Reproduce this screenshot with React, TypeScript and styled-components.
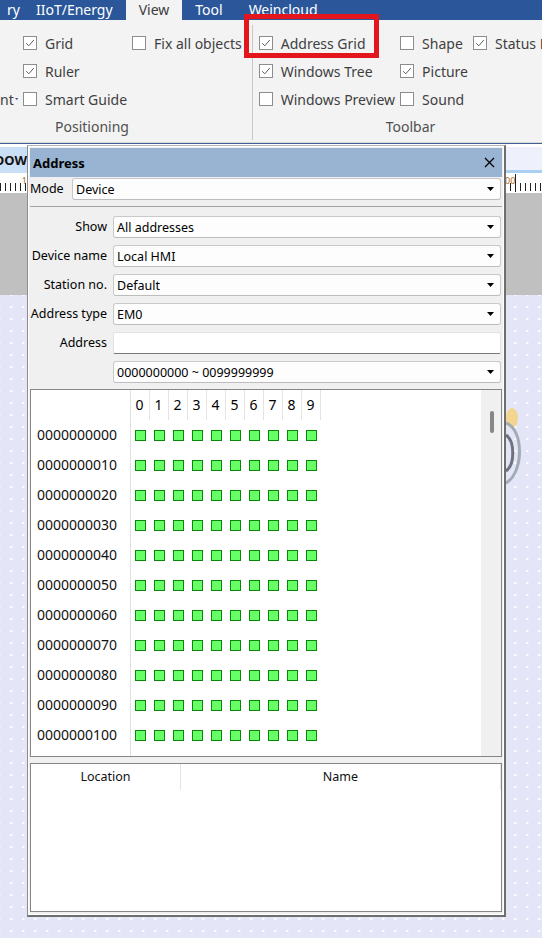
import React from "react";
import styled, { createGlobalStyle } from "styled-components";

const GlobalStyle = createGlobalStyle`
  html, body {
    margin: 0;
    padding: 0;
  }
  body {
    font-family: "Noto Sans", "Segoe UI", sans-serif;
    background: #e5e5f8;
  }
`;

const Page = styled.div`
  position: relative;
  width: 542px;
  height: 938px;
  overflow: hidden;
  display: flex;
  flex-direction: column;
`;

/* ---------- ribbon ---------- */

const TabStrip = styled.div`
  height: 20px;
  flex-shrink: 0;
  display: flex;
  background: #2b579a;
`;

const Tab = styled.div<{ $active?: boolean }>`
  padding: 0 13px;
  font-size: 14px;
  line-height: 20px;
  white-space: nowrap;
  color: ${(p) => (p.$active ? "#3c3c3c" : "#fff")};
  background: ${(p) => (p.$active ? "#f3f3f3" : "transparent")};

  &:first-child {
    padding: 0 3px 0 7px;
  }
`;

const Ribbon = styled.div`
  height: 123px;
  box-sizing: border-box;
  flex-shrink: 0;
  display: flex;
  overflow: hidden;
  background: #f3f3f3;
  border-bottom: 1px solid #d8d8d8;
`;

const Group = styled.div<{ $pad: string }>`
  flex-shrink: 0;
  display: flex;
  flex-direction: column;
  padding: ${(p) => p.$pad};
  padding-top: 9px;
`;

const GroupBody = styled.div`
  display: flex;
  gap: 5px;
  height: 85px;
`;

const Column = styled.div<{ $width?: number }>`
  display: flex;
  flex-direction: column;
  flex-shrink: 0;
  ${(p) => (p.$width ? `width: ${p.$width}px;` : "")}
`;

const CheckRow = styled.div`
  height: 28px;
  display: flex;
  align-items: center;
  gap: 8px;
  font-size: 14px;
  color: #3f3f3f;
  white-space: nowrap;
`;

const DropRow = styled(CheckRow)`
  justify-content: flex-end;
  gap: 1px;
`;

const Box = styled.span`
  width: 14px;
  height: 14px;
  box-sizing: border-box;
  flex-shrink: 0;
  border: 1px solid #8d8d8d;
  background: #fff;
  display: flex;
  align-items: center;
  justify-content: center;
`;

const GroupLabel = styled.div<{ $center?: boolean }>`
  height: 26px;
  line-height: 26px;
  font-size: 14px;
  color: #505050;
  white-space: nowrap;
  text-align: ${(p) => (p.$center ? "center" : "left")};
  padding-left: ${(p) => (p.$center ? "0" : "55px")};
`;

const GroupSep = styled.div`
  width: 1px;
  flex-shrink: 0;
  margin: 5px 0 2px;
  background: #c8c8c8;
`;

const Highlight = styled.div`
  position: absolute;
  left: 244px;
  top: 14px;
  width: 135px;
  height: 44px;
  box-sizing: border-box;
  border: 5px solid #e3161d;
  pointer-events: none;
`;

/* ---------- workspace behind the panel ---------- */

const Workspace = styled.div`
  flex: 1;
  position: relative;
  display: flex;
  flex-direction: column;
  background: #fff;
  border-top: 1px solid #3e5f95;
  padding-top: 3px;
`;

const DocTabs = styled.div`
  height: 26px;
  flex-shrink: 0;
  display: flex;
`;

const DocTab = styled.div`
  width: 27px;
  overflow: hidden;
  display: flex;
  justify-content: flex-end;
  align-items: center;
  background: #c9dff6;
  font-size: 13px;
  font-weight: 700;
  color: #111;
  white-space: nowrap;
`;

const DocTabFill = styled.div`
  flex: 1;
  background: #eef1fb;
  border-bottom: 3px solid #a9cff2;
`;

const Ruler = styled.div`
  height: 20px;
  flex-shrink: 0;
  display: flex;
  justify-content: space-between;
  background-color: #fff;
  background-image: repeating-linear-gradient(
    to right,
    #222 0 1px,
    transparent 1px 5px
  );
  background-size: 100% 8px;
  background-position: 0 10px;
  background-repeat: no-repeat;
  font-size: 9px;
  line-height: 12px;
  color: #b06a20;
`;

const RulerStart = styled.div`
  width: 27px;
  text-align: right;
  padding-top: 2px;
`;

const RulerEnd = styled.div`
  width: 37px;
  display: flex;
  align-items: flex-start;
  padding-top: 2px;
`;

const LongTick = styled.span`
  width: 1px;
  height: 18px;
  background: #222;
  margin-top: -1px;
`;

const GrayBand = styled.div`
  height: 102px;
  flex-shrink: 0;
  background: #c0c0c0;
`;

const Canvas = styled.div`
  flex: 1;
  position: relative;
  background-color: #e5e5f8;
  background-image: radial-gradient(circle, #ffffff 0.9px, transparent 1.2px);
  background-size: 12px 12px;
  background-position: 5.4px -6px;
`;

const CanvasPicture = styled.svg`
  position: absolute;
  left: 505px;
  top: 110px;
`;

/* ---------- address panel ---------- */

const Panel = styled.div`
  position: absolute;
  left: 27px;
  top: 1px;
  width: 479px;
  height: 772px;
  box-sizing: border-box;
  display: flex;
  flex-direction: column;
  padding: 2px 2px 3px 2px;
  background: #f0f0f0;
  border-left: 1px solid #8c8c8c;
  border-top: 1px solid #b4b4b4;
  border-right: 2px solid #6e6e6e;
  border-bottom: 2px solid #6e6e6e;
  box-shadow: inset 1px 1px 0 #fff, inset -1px -1px 0 #fff;
  font-size: 12.5px;
  color: #000;
`;

const TitleBar = styled.div`
  height: 29px;
  flex-shrink: 0;
  display: flex;
  align-items: center;
  justify-content: space-between;
  padding: 0 7px 0 3px;
  background: #99b4d2;
  font-size: 13px;
  font-weight: 700;
`;

const ModeRow = styled.div`
  margin-top: 1px;
  display: flex;
  padding-right: 1px;
`;

const ModeLabel = styled.div`
  width: 42px;
  line-height: 22px;
  flex-shrink: 0;
`;

const Divider = styled.div`
  margin-top: 6px;
  height: 1px;
  flex-shrink: 0;
  background: #a3a3a3;
`;

const Fields = styled.div`
  margin-top: 9px;
  display: grid;
  grid-template-columns: 83px 1fr;
  row-gap: 7px;
  padding-right: 1px;
`;

const FieldLabel = styled.div`
  line-height: 22px;
  text-align: right;
  padding-right: 6px;
  white-space: nowrap;
`;

const Combo = styled.div`
  flex: 1;
  height: 22px;
  box-sizing: border-box;
  display: flex;
  align-items: center;
  justify-content: space-between;
  padding: 0 6px 0 3px;
  background: #fdfdfd;
  border: 1px solid #c9c9c9;
  border-bottom-color: #bdbdbd;
  border-radius: 3px;
  white-space: nowrap;
`;

const TextInput = styled.div`
  height: 22px;
  box-sizing: border-box;
  background: #fff;
  border: 1px solid #e2e2e2;
  border-bottom: 1px solid #7a7a7a;
  border-radius: 2px;
`;

const GridBox = styled.div`
  margin-top: 6px;
  height: 368px;
  box-sizing: border-box;
  flex-shrink: 0;
  display: flex;
  background: #fff;
  border: 1px solid #868686;
`;

const LabelColumn = styled.div`
  width: 100px;
  box-sizing: border-box;
  border-right: 1px solid #e1e1e1;
  padding-top: 30px;
`;

const RowLabel = styled.div`
  height: 30px;
  line-height: 30px;
  padding-left: 6px;
  font-size: 14px;
  color: #111;
`;

const CellArea = styled.div`
  flex: 1;
  display: flex;
  flex-direction: column;
`;

const CellRow = styled.div`
  height: 30px;
  display: flex;
  font-size: 14px;
`;

const HeadCell = styled.div`
  width: 19px;
  box-sizing: border-box;
  border-right: 1px solid #e4e4e4;
  text-align: center;
  line-height: 30px;
  padding-right: 1px;
`;

const Cell = styled.div`
  width: 19px;
  display: flex;
  align-items: center;
  justify-content: center;
`;

const Bit = styled.span<{ $on: boolean }>`
  width: 11px;
  height: 11px;
  box-sizing: border-box;
  border: 1px solid #0a860a;
  background: ${(p) => (p.$on ? "#66ff66" : "#ffffff")};
`;

const ScrollTrack = styled.div`
  width: 20px;
  flex-shrink: 0;
  display: flex;
  justify-content: center;
  padding-top: 21px;
  background: #f0f0f0;
`;

const ScrollThumb = styled.div`
  width: 4px;
  height: 22px;
  border-radius: 2px;
  background: #878787;
  margin-left: 1px;
`;

const ListBox = styled.div`
  margin-top: 6px;
  flex: 1;
  background: #fff;
  border: 1px solid #868686;
`;

const ListHeader = styled.div`
  display: flex;
  height: 26px;
`;

const ListHeadCell = styled.div<{ $width: number }>`
  width: ${(p) => p.$width}px;
  box-sizing: border-box;
  border-right: 1px solid #e4e4e4;
  text-align: center;
  line-height: 26px;
  color: #111;
`;

const Check = () => (
  <svg width="12" height="12" viewBox="0 0 12 12">
    <path d="M2.2 6.2 L4.8 8.8 L9.8 3" fill="none" stroke="#5e5e5e" strokeWidth="1" />
  </svg>
);

const Checkbox = ({ label, checked }: { label: string; checked?: boolean }) => (
  <CheckRow>
    <Box>{checked ? <Check /> : null}</Box>
    {label}
  </CheckRow>
);

const Arrow = ({ color = "#000" }: { color?: string }) => (
  <svg width="7" height="4" viewBox="0 0 7 4">
    <path d="M0 0 H7 L3.5 4 Z" fill={color} />
  </svg>
);

const Dropdown = ({ value }: { value: string }) => (
  <Combo>
    <span>{value}</span>
    <Arrow />
  </Combo>
);

const rows = Array.from({ length: 11 }, (_, i) => String(i * 10).padStart(10, "0"));
const digits = Array.from({ length: 10 }, (_, i) => i);

export default function App() {
  return (
    <>
      <GlobalStyle />
      <Page>
        <TabStrip>
          <Tab>ry</Tab>
          <Tab>IIoT/Energy</Tab>
          <Tab $active>View</Tab>
          <Tab>Tool</Tab>
          <Tab>Weincloud</Tab>
        </TabStrip>

        <Ribbon>
          <Group $pad="0 10px 0 0">
            <GroupBody>
              <Column $width={18}>
                <CheckRow />
                <CheckRow />
                <DropRow>
                  nt
                  <Arrow color="#3b5f96" />
                </DropRow>
              </Column>
              <Column $width={104}>
                <Checkbox label="Grid" checked />
                <Checkbox label="Ruler" checked />
                <Checkbox label="Smart Guide" />
              </Column>
              <Column>
                <Checkbox label="Fix all objects" />
              </Column>
            </GroupBody>
            <GroupLabel>Positioning</GroupLabel>
          </Group>
          <GroupSep />
          <Group $pad="0 7px 0 6px">
            <GroupBody>
              <Column>
                <Checkbox label="Address Grid" checked />
                <Checkbox label="Windows Tree" checked />
                <Checkbox label="Windows Preview" />
              </Column>
              <Column>
                <Checkbox label="Shape" />
                <Checkbox label="Picture" checked />
                <Checkbox label="Sound" />
              </Column>
              <Column>
                <Checkbox label="Status Bar" checked />
              </Column>
            </GroupBody>
            <GroupLabel $center>Toolbar</GroupLabel>
          </Group>
        </Ribbon>

        <Workspace>
          <DocTabs>
            <DocTab>10 : WINDOW</DocTab>
            <DocTabFill />
          </DocTabs>
          <Ruler>
            <RulerStart>1</RulerStart>
            <RulerEnd>
              00
              <LongTick />
            </RulerEnd>
          </Ruler>
          <GrayBand />
          <Canvas>
            <CanvasPicture width="24" height="80" viewBox="0 0 24 80">
              <ellipse cx="7" cy="13" rx="6" ry="10" fill="#f4d58f" />
              <path d="M1 18 C 19 24, 19 68, 1 78" fill="none" stroke="#a2acb5" strokeWidth="3" />
              <path d="M1 30 C 10 36, 10 60, 1 66" fill="none" stroke="#6d747c" strokeWidth="3" />
            </CanvasPicture>
          </Canvas>

          <Panel>
            <TitleBar>
              <span>Address</span>
              <svg width="11" height="11" viewBox="0 0 11 11">
                <path d="M1 1 L10 10 M10 1 L1 10" stroke="#000" strokeWidth="1.3" />
              </svg>
            </TitleBar>

            <ModeRow>
              <ModeLabel>Mode</ModeLabel>
              <Dropdown value="Device" />
            </ModeRow>
            <Divider />

            <Fields>
              <FieldLabel>Show</FieldLabel>
              <Dropdown value="All addresses" />
              <FieldLabel>Device name</FieldLabel>
              <Dropdown value="Local HMI" />
              <FieldLabel>Station no.</FieldLabel>
              <Dropdown value="Default" />
              <FieldLabel>Address type</FieldLabel>
              <Dropdown value="EM0" />
              <FieldLabel>Address</FieldLabel>
              <TextInput />
              <FieldLabel />
              <Dropdown value="0000000000 ~ 0099999999" />
            </Fields>

            <GridBox>
              <LabelColumn>
                {rows.map((r) => (
                  <RowLabel key={r}>{r}</RowLabel>
                ))}
              </LabelColumn>
              <CellArea>
                <CellRow>
                  {digits.map((d) => (
                    <HeadCell key={d}>{d}</HeadCell>
                  ))}
                </CellRow>
                {rows.map((r) => (
                  <CellRow key={r}>
                    {digits.map((d) => (
                      <Cell key={d}>
                        <Bit $on />
                      </Cell>
                    ))}
                  </CellRow>
                ))}
              </CellArea>
              <ScrollTrack>
                <ScrollThumb />
              </ScrollTrack>
            </GridBox>

            <ListBox>
              <ListHeader>
                <ListHeadCell $width={150}>Location</ListHeadCell>
                <ListHeadCell $width={320}>Name</ListHeadCell>
              </ListHeader>
            </ListBox>
          </Panel>
        </Workspace>

        <Highlight />
      </Page>
    </>
  );
}
